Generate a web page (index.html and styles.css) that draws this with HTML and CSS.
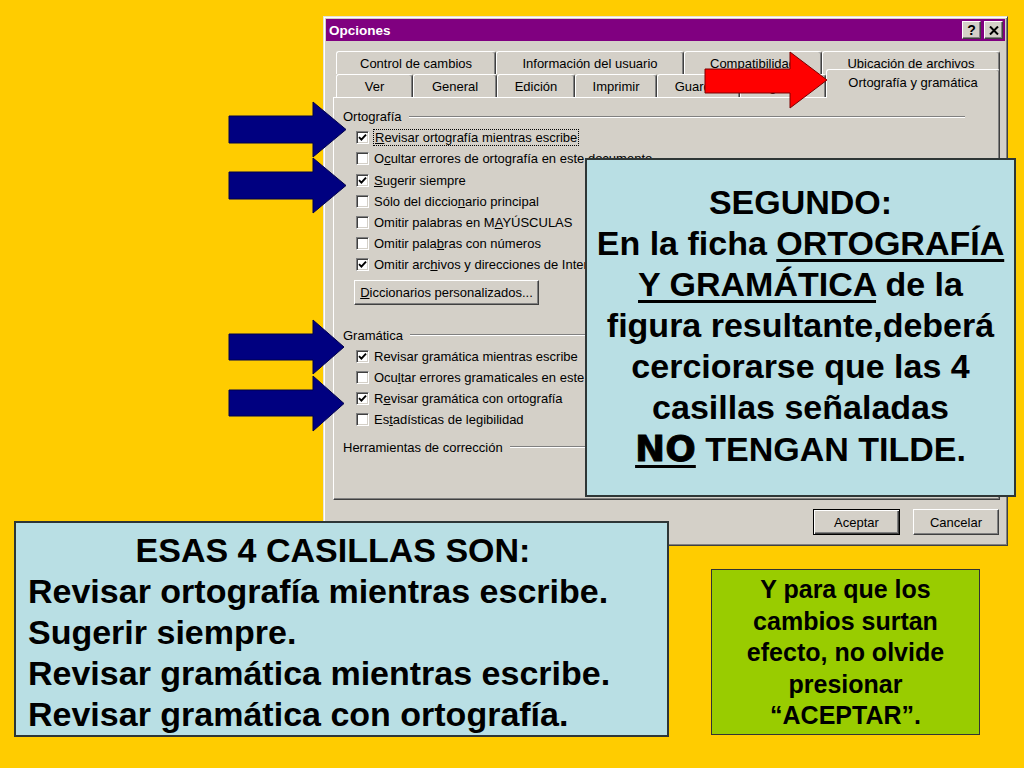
FILE: index.html
```html
<!DOCTYPE html>
<html lang="es">
<head>
<meta charset="utf-8">
<title>Opciones - Ortografía y gramática</title>
<link rel="stylesheet" href="styles.css">
</head>
<body>
<div class="slide">

  <div class="dialog">
    <div class="titlebar">
      <span class="title">Opciones</span>
      <div class="tb-buttons">
        <span class="tb-btn">?</span>
        <span class="tb-btn"><svg width="10" height="9" viewBox="0 0 10 9"><path d="M1 0.5 L9 8.5 M9 0.5 L1 8.5" stroke="#000" stroke-width="2" fill="none"/></svg></span>
      </div>
    </div>

    <div class="dlg-body">
      <div class="tabs">
        <div class="tab-row row1">
          <div class="tab w160">Control de cambios</div>
          <div class="tab w188">Información del usuario</div>
          <div class="tab w138">Compatibilidad</div>
          <div class="tab w178">Ubicación de archivos</div>
        </div>
        <div class="tab-row row2">
          <div class="tab w77">Ver</div>
          <div class="tab w84">General</div>
          <div class="tab w78">Edición</div>
          <div class="tab w82">Imprimir</div>
          <div class="tab w83">Guardar</div>
          <div class="tab w86">Seguridad</div>
          <div class="tab w174 active">Ortografía y gramática</div>
        </div>
      </div>

      <div class="panel">
        <div class="grp">Ortografía</div>
        <div class="chk-row"><span class="cb"><svg width="9" height="9" viewBox="0 0 9 9"><path d="M1 4.2 L3.4 6.6 L8 1.6" stroke="#000" stroke-width="1.9" fill="none"/></svg></span><span class="lbl focus"><u>R</u>evisar ortografía mientras escribe</span></div>
        <div class="chk-row"><span class="cb"></span><span class="lbl">O<u>c</u>ultar errores de ortografía en este documento</span></div>
        <div class="chk-row"><span class="cb"><svg width="9" height="9" viewBox="0 0 9 9"><path d="M1 4.2 L3.4 6.6 L8 1.6" stroke="#000" stroke-width="1.9" fill="none"/></svg></span><span class="lbl"><u>S</u>ugerir siempre</span></div>
        <div class="chk-row"><span class="cb"></span><span class="lbl">Sólo del diccio<u>n</u>ario principal</span></div>
        <div class="chk-row"><span class="cb"></span><span class="lbl">Omitir palabras en M<u>A</u>YÚSCULAS</span></div>
        <div class="chk-row"><span class="cb"></span><span class="lbl">Omitir pala<u>b</u>ras con números</span></div>
        <div class="chk-row"><span class="cb"><svg width="9" height="9" viewBox="0 0 9 9"><path d="M1 4.2 L3.4 6.6 L8 1.6" stroke="#000" stroke-width="1.9" fill="none"/></svg></span><span class="lbl">Omitir arc<u>h</u>ivos y direcciones de Internet</span></div>
        <div class="btn btn-dic"><span><u>D</u>iccionarios personalizados...</span></div>

        <div class="grp grp-gram">Gramática</div>
        <div class="chk-row"><span class="cb"><svg width="9" height="9" viewBox="0 0 9 9"><path d="M1 4.2 L3.4 6.6 L8 1.6" stroke="#000" stroke-width="1.9" fill="none"/></svg></span><span class="lbl">Revisar <u>g</u>ramática mientras escribe</span></div>
        <div class="chk-row"><span class="cb"></span><span class="lbl">Ocu<u>l</u>tar errores gramaticales en este documento</span></div>
        <div class="chk-row"><span class="cb"><svg width="9" height="9" viewBox="0 0 9 9"><path d="M1 4.2 L3.4 6.6 L8 1.6" stroke="#000" stroke-width="1.9" fill="none"/></svg></span><span class="lbl">R<u>e</u>visar gramática con ortografía</span></div>
        <div class="chk-row"><span class="cb"></span><span class="lbl">Es<u>t</u>adísticas de legibilidad</span></div>

        <div class="grp grp-herr">Herramientas de corrección</div>
      </div>

      <div class="dlg-footer">
        <div class="btn btn-ok">Aceptar</div>
        <div class="btn btn-cancel">Cancelar</div>
      </div>
    </div>
  </div>

  <svg class="arrows-blue" width="140" height="340" viewBox="0 0 140 340">
    <polygon points="9,21 93,21 93,7 126,34.5 93,62 93,48 9,48"/>
    <polygon points="9,77 93,77 93,63 126,90.5 93,118 93,104 9,104"/>
    <polygon points="9,239 93,239 93,225 124,252 93,279 93,265 9,265"/>
    <polygon points="9,295 93,295 93,281 124,308.5 93,336 93,321 9,321"/>
  </svg>

  <svg class="arrow-red" width="135" height="64" viewBox="0 0 135 64">
    <polygon points="5,21 90,21 90,4 127,32 90,60 90,45 5,45"/>
  </svg>

  <div class="note-right">
    SEGUNDO:<br>
    En la ficha <span class="ul">ORTOGRAFÍA</span><br>
    <span class="ul">Y GRAMÁTICA</span> de la<br>
    figura resultante,deberá<br>
    cerciorarse que las 4<br>
    casillas señaladas<br>
    <span class="ul no">NO</span> TENGAN TILDE.
  </div>

  <div class="note-left">
    <div class="head">ESAS 4 CASILLAS SON:</div>
    <div>Revisar ortografía mientras escribe.</div>
    <div>Sugerir siempre.</div>
    <div>Revisar gramática mientras escribe.</div>
    <div>Revisar gramática con ortografía.</div>
  </div>

  <div class="note-green">
    Y para que los<br>
    cambios surtan<br>
    efecto, no olvide<br>
    presionar<br>
    “ACEPTAR”.
  </div>

</div>
</body>
</html>
```

FILE: styles.css
```css
* { box-sizing: border-box; }
html, body { margin: 0; padding: 0; }
body {
  width: 1024px;
  height: 768px;
  overflow: hidden;
  background: #FFCC00;
  font-family: "Liberation Sans", Arial, sans-serif;
}
.slide {
  position: relative;
  width: 1024px;
  height: 768px;
  background: #FFCC00;
  overflow: hidden;
}

/* ---------- dialog ---------- */
.dialog {
  position: absolute;
  z-index: 0;
  left: 323px;
  top: 16px;
  width: 685px;
  height: 530px;
  background: #D4D0C8;
  border: 1px solid;
  border-color: #E6E3DC #404040 #404040 #E6E3DC;
  box-shadow: inset 1px 1px #fff, inset -1px -1px #808080;
  padding: 2px;
  display: flex;
  flex-direction: column;
  font-family: "Liberation Sans", Arial, sans-serif;
  font-size: 13px;
  color: #000;
}
.titlebar {
  height: 22px;
  flex: none;
  background: #800080;
  display: flex;
  align-items: center;
  padding: 0 2px 0 3px;
}
.title {
  color: #fff;
  font-weight: bold;
  font-size: 13.5px;
}
.tb-buttons {
  margin-left: auto;
  display: flex;
  gap: 3px;
}
.tb-btn {
  width: 19px;
  height: 18px;
  background: #D4D0C8;
  border: 1px solid;
  border-color: #fff #404040 #404040 #fff;
  box-shadow: inset -1px -1px #808080;
  display: flex;
  align-items: center;
  justify-content: center;
  font-weight: bold;
  font-size: 14px;
  line-height: 1;
}

.dlg-body {
  flex: 1;
  padding: 10px 5px 0 7px;
  display: flex;
  flex-direction: column;
}
.tabs {
  margin-left: 3px;
  position: relative;
  z-index: 2;
}
.tab-row {
  display: flex;
  height: 23px;
  align-items: flex-start;
}
.tab {
  height: 23px;
  flex: none;
  background: #D4D0C8;
  border-top: 1px solid #fff;
  border-left: 1px solid #fff;
  border-right: 1px solid #404040;
  box-shadow: inset -1px 0 #808080;
  border-radius: 3px 3px 0 0;
  display: flex;
  align-items: center;
  justify-content: center;
  white-space: nowrap;
  overflow: hidden;
}
.tab.active {
  height: 29px;
  margin-top: -5px;
  padding-bottom: 3px;
  position: relative;
}
.w160 { width: 160px; }
.w188 { width: 188px; }
.w138 { width: 138px; }
.w178 { width: 178px; }
.w77 { width: 77px; }
.w84 { width: 84px; }
.w78 { width: 78px; }
.w82 { width: 82px; }
.w83 { width: 83px; }
.w86 { width: 86px; }
.w174 { width: 174px; }

.panel {
  height: 403px;
  flex: none;
  border: 1px solid;
  border-color: #fff #404040 #404040 #fff;
  box-shadow: inset -1px -1px #808080;
  padding: 8px 0 0 9px;
  overflow: hidden;
  position: relative;
  z-index: 1;
}
.grp {
  display: flex;
  align-items: center;
  height: 21.2px;
  margin-right: 34px;
  white-space: nowrap;
}
.grp::after {
  content: "";
  flex: 1;
  margin-left: 7px;
  border-top: 1px solid #808080;
  border-bottom: 1px solid #fff;
}
.grp-gram { margin-top: 20px; }
.grp-herr { margin-top: 6px; }

.chk-row {
  display: flex;
  align-items: center;
  height: 21.2px;
  padding-left: 13px;
  white-space: nowrap;
}
.lbl { white-space: nowrap; }
.cb {
  width: 13px;
  height: 13px;
  flex: none;
  margin-right: 5px;
  background: #fff;
  border: 1px solid;
  border-color: #808080 #fff #fff #808080;
  box-shadow: inset 1px 1px #404040, inset -1px -1px #D4D0C8;
  display: flex;
  align-items: center;
  justify-content: center;
}
.focus {
  outline: 1px dotted #000;
  outline-offset: 0;
  padding: 0 1px;
}

.btn {
  height: 25px;
  background: #D4D0C8;
  border: 1px solid;
  border-color: #fff #404040 #404040 #fff;
  box-shadow: inset -1px -1px #808080;
  display: flex;
  align-items: center;
  justify-content: center;
  white-space: nowrap;
}
.btn-dic {
  width: 185px;
  margin: 4px 0 0 11px;
}
.dlg-footer {
  display: flex;
  justify-content: flex-end;
  gap: 13px;
  margin-top: 9px;
  padding-right: 1px;
}
.btn-ok {
  width: 87px;
  height: 26px;
  border: 1px solid #000;
  box-shadow: inset 1px 1px #fff, inset -1px -1px #404040, inset -2px -2px #808080;
}
.btn-cancel {
  width: 86px;
  height: 26px;
}

/* ---------- arrows ---------- */
.arrows-blue {
  position: absolute;
  left: 220px;
  top: 95px;
}
.arrows-blue polygon {
  fill: #000080;
  stroke: #00004A;
  stroke-width: 1;
}
.arrow-red {
  position: absolute;
  left: 700px;
  top: 48px;
}
.arrow-red polygon {
  fill: #FF0000;
  stroke: #7A0000;
  stroke-width: 1;
}

/* ---------- notes ---------- */
.note-right {
  position: absolute;
  left: 585px;
  top: 158px;
  width: 431px;
  height: 339px;
  background: #B9DFE4;
  border: 2px solid #2E3636;
  padding-top: 22px;
  text-align: center;
  font-family: "Liberation Sans", Arial, sans-serif;
  font-weight: bold;
  font-size: 34px;
  line-height: 41px;
  color: #000;
  white-space: nowrap;
}
.ul {
  text-decoration: underline;
  text-decoration-thickness: 3px;
  text-underline-offset: 4px;
}
.no {
  font-family: "DejaVu Sans", sans-serif;
  font-weight: bold;
  font-size: 36px;
  -webkit-text-stroke: 0.8px #000;
}

.note-left {
  position: absolute;
  left: 14px;
  top: 521px;
  width: 655px;
  height: 216px;
  background: #B9DFE4;
  border: 2px solid #2E3636;
  padding: 7px 0 0 12px;
  font-family: "Liberation Sans", Arial, sans-serif;
  font-weight: bold;
  font-size: 34px;
  line-height: 41px;
  color: #000;
  white-space: nowrap;
}
.note-left .head {
  text-align: center;
  padding-right: 29px;
}

.note-green {
  position: absolute;
  left: 711px;
  top: 569px;
  width: 269px;
  height: 166px;
  background: #99CC00;
  border: 1px solid #333;
  padding-top: 4px;
  text-align: center;
  font-family: "Liberation Sans", Arial, sans-serif;
  font-weight: bold;
  font-size: 25px;
  line-height: 31.5px;
  color: #000;
  white-space: nowrap;
}
```
